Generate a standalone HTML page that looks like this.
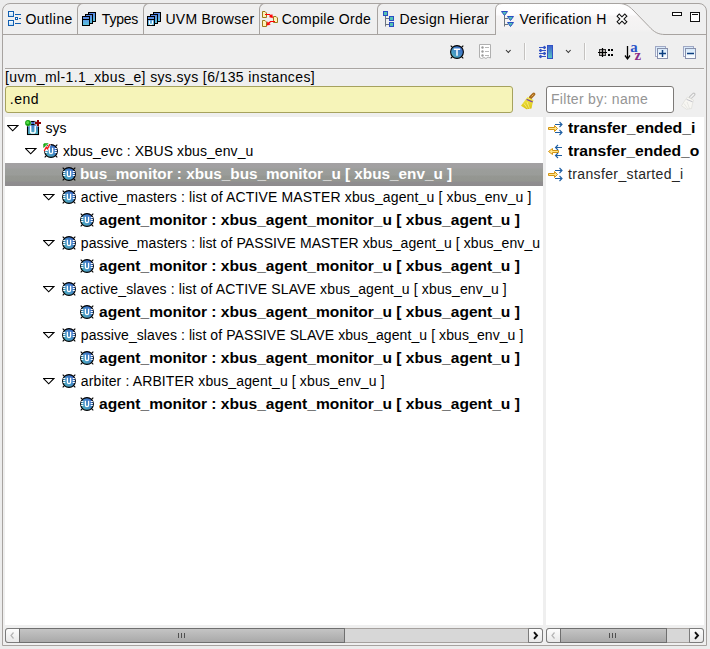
<!DOCTYPE html>
<html><head><meta charset="utf-8">
<style>
*{margin:0;padding:0;box-sizing:border-box}
html,body{width:710px;height:649px;overflow:hidden;background:#ececec;font-family:"Liberation Sans",sans-serif;color:#000}
.a{position:absolute}
.t{position:absolute;font-size:14px;line-height:16px;white-space:nowrap}
.b{font-weight:bold}
#frame{left:2px;top:3px;width:705px;height:643px;border:1px solid #a7a3a0;border-radius:8px 8px 0 0;background:#efefef}
.tab{position:absolute;top:3px;height:32px;border-left:1px solid #a7a3a0;border-top:1px solid #a7a3a0;border-top-left-radius:6px}
#tabline1{left:2px;top:34px;width:493px;height:1px;background:#a7a3a0}
#tabline2{left:664px;top:34px;width:42px;height:1px;background:#a7a3a0}
#hline{left:5px;top:68px;width:699px;height:1px;background:#a9a5a2}
#hline2{left:5px;top:69px;width:699px;height:1px;background:#f5f5f5}
#yellow{left:5px;top:86px;width:508px;height:27px;background:#f6f4b9;border:1px solid #a6a25e;border-radius:3px}
#filter{left:546px;top:86px;width:128px;height:27px;background:#fff;border:1px solid #7d7a78;border-radius:3px}
#tree1{left:5px;top:117px;width:538px;height:508px;background:#fff;overflow:hidden}
#tree2{left:546px;top:117px;width:158px;height:508px;background:#fff;overflow:hidden}
#sel{left:0;top:46px;width:538px;height:23px;background:linear-gradient(#a3a1a3 0,#a1a0a1 5px,#9c9e9b 6px,#9a9c99 12px,#959792 13px,#939590 18px,#908e90 19px,#8e8c8e 23px)}
.sb{position:absolute;top:628px;height:15px;border:1px solid #a5a19e;background:#d7d7d7;border-radius:3px}
.btn{position:absolute;top:-1px;height:15px;width:15px;border:1px solid #7b7b7b;background:linear-gradient(#fdfdfd,#e8e8e8)}
.thumb{position:absolute;top:-1px;height:15px;border:1px solid #6f6f6f;background:linear-gradient(#c4c4c4,#a9a9a9)}
.grip{position:absolute;top:4px;width:1px;height:5px;background:#505050}
</style></head><body>
<svg width="0" height="0" style="position:absolute">
<defs>
 <linearGradient id="bg1" x1="0" y1="0" x2="0" y2="1"><stop offset="0" stop-color="#3b62c9"/><stop offset="1" stop-color="#4fb9c4"/></linearGradient>
 <linearGradient id="bg2" x1="1" y1="0" x2="0" y2="1"><stop offset="0" stop-color="#3558c8"/><stop offset="1" stop-color="#52bcc0"/></linearGradient>
 <linearGradient id="lb" x1="0" y1="0" x2="0" y2="1"><stop offset="0" stop-color="#ffffff"/><stop offset="1" stop-color="#b8dcf8"/></linearGradient>
 <linearGradient id="eb" x1="0" y1="0" x2="0" y2="1"><stop offset="0" stop-color="#d4e8fa"/><stop offset="1" stop-color="#ffffff"/></linearGradient>
 <symbol id="bugU" viewBox="0 0 14 14">
  <path d="M0.7,0.7 L3.2,3.2 M13.3,0.7 L10.8,3.2 M0.7,13.3 L3.2,10.8 M13.3,13.3 L10.8,10.8" stroke="#000" stroke-width="1.1"/>
  <circle cx="7" cy="7" r="6.4" fill="url(#bg2)" stroke="#000" stroke-width="1.1"/>
  <path d="M1.2,4.5 H3.3 M1.1,6.5 H3.3 M1.2,8.5 H3.3 M10.7,4.5 H12.8 M10.7,6.5 H12.9 M10.7,8.5 H12.8" stroke="#fff" stroke-width="1"/>
  <path d="M5.4,3.8 V8 Q5.4,9.7 7,9.7 Q8.6,9.7 8.6,8 V3.8" fill="none" stroke="#fff" stroke-width="1.3"/>
 </symbol>
 <symbol id="tri" viewBox="0 0 12 7">
  <path d="M0.5,0.5 H10.9 L5.7,5.8 Z" fill="#fff" stroke="#000" stroke-width="1.1" stroke-linejoin="miter"/>
 </symbol>
 <symbol id="pin" viewBox="0 0 16 15">
  <path d="M1.5,6.5 H7.5 V4.5 L10.5,7.5 L7.5,10.5 V8.5 H1.5 Z" fill="#ffe58a" stroke="#d39412" stroke-width="1"/>
  <path d="M8,3.5 H15 M12.5,1 L15,3.5 L12.5,6 M8,11.5 H15 M12.5,9 L15,11.5 L12.5,14" fill="none" stroke="#1f5fa3" stroke-width="1.1"/>
 </symbol>
 <symbol id="pout" viewBox="0 0 16 15">
  <path d="M11.5,6.5 H5.5 V4.5 L1.5,7.5 L5.5,10.5 V8.5 H11.5 Z" fill="#ffe58a" stroke="#d39412" stroke-width="1"/>
  <path d="M15,3.5 H8.5 M11,1 L8.5,3.5 L11,6 M15,11.5 H8.5 M11,9 L8.5,11.5 L11,14" fill="none" stroke="#1f5fa3" stroke-width="1.1"/>
 </symbol>
 <symbol id="sysI" viewBox="0 0 17 16">
  <rect x="2.5" y="1.5" width="11" height="13" fill="url(#bg1)" stroke="#000" stroke-width="1.1"/>
  <path d="M2.5,4.5 H13.5" stroke="#000" stroke-width="1.1"/>
  <path d="M5.6,5.8 V11.4 Q5.6,13.1 7.9,13.1 Q10.2,13.1 10.2,11.4 V5.8" fill="none" stroke="#fff" stroke-width="1.5"/>
  <circle cx="3" cy="3" r="3.4" fill="#fff" opacity="0.7"/>
  <circle cx="3" cy="3" r="2.9" fill="#12a012"/><circle cx="2.6" cy="2.5" r="1.5" fill="#5ade48"/>
  <path d="M9.5,3 H16.5 M13,-0.5 V6.5" stroke="#fff" stroke-width="3.4" opacity="0.8"/>
  <path d="M10,3 H16 M13,0 V6" stroke="#8a0000" stroke-width="2"/>
 </symbol>
</defs></svg>
<div id="frame" class="a"></div>

<!-- tabs -->
<div class="tab" style="left:77px;width:66px"></div>
<div class="tab" style="left:143px;width:116px"></div>
<div class="tab" style="left:259px;width:118px"></div>
<div class="tab" style="left:377px;width:119px"></div>
<div id="tabline1" class="a"></div>
<div id="tabline2" class="a"></div>
<svg class="a" style="left:494px;top:3px" width="172" height="33">
  <defs><linearGradient id="atg" x1="0" y1="0" x2="0" y2="1"><stop offset="0" stop-color="#ffffff"/><stop offset="0.33" stop-color="#fdfcfd"/><stop offset="0.4" stop-color="#f6f4f4"/><stop offset="0.8" stop-color="#f3f2f2"/><stop offset="0.88" stop-color="#efefef"/><stop offset="1" stop-color="#efefef"/></linearGradient></defs>
  <path d="M1.5,32 L1.5,7 Q1.5,0.5 8,0.5 L125,0.5 C131,0.5 135,3 139,7 L155,23.5 C160,29 164,31.5 171,31.5 L172,31.5 L172,33 L1.5,33 Z" fill="url(#atg)"/>
  <path d="M1.5,32 L1.5,7 Q1.5,0.5 8,0.5 L125,0.5 C131,0.5 135,3 139,7 L155,23.5 C160,29 164,31.5 171,31.5 L172,31.5" fill="none" stroke="#a7a3a0" stroke-width="1"/>
</svg>

<div class="t" style="left:25.5px;letter-spacing:0.42px;top:10.5px">Outline</div>
<div class="t" style="left:101.8px;letter-spacing:-0.2px;top:10.5px">Types</div>
<div class="t" style="left:165.5px;letter-spacing:0.22px;top:10.5px">UVM Browser</div>
<div class="t" style="left:281.7px;letter-spacing:0.24px;top:10.5px">Compile Orde</div>
<div class="t" style="left:399.6px;letter-spacing:0.32px;top:10.5px">Design Hierar</div>
<div class="t" style="left:519.5px;letter-spacing:0.33px;top:10.5px">Verification H</div>

<!-- close x -->
<svg class="a" style="left:616px;top:13px" width="13" height="12">
  <path d="M3.2,3.2 L8.8,8.8 M8.8,3.2 L3.2,8.8" stroke="#111" stroke-width="4" stroke-linecap="square"/>
  <path d="M3.2,3.2 L8.8,8.8 M8.8,3.2 L3.2,8.8" stroke="#fff" stroke-width="1.9" stroke-linecap="square"/>
</svg>
<!-- min/max -->
<div class="a" style="left:672px;top:12px;width:10px;height:4px;border:1px solid #111;background:#fff"></div>
<div class="a" style="left:690px;top:12px;width:10px;height:10px;border:1px solid #111;background:#fff"></div><div class="a" style="left:692px;top:14px;width:6px;height:1px;background:#111"></div>

<svg class="a" style="left:0;top:0" width="710" height="117">
 <defs>
  <linearGradient id="tg" x1="0" y1="0" x2="0" y2="1"><stop offset="0" stop-color="#5a82e6"/><stop offset="1" stop-color="#5cc6dc"/></linearGradient>
  <linearGradient id="tg2" x1="0" y1="0" x2="0" y2="1"><stop offset="0" stop-color="#3d5fd0"/><stop offset="1" stop-color="#5ac8c0"/></linearGradient>
  <linearGradient id="brm" x1="0" y1="0" x2="0" y2="1"><stop offset="0" stop-color="#f6ec50"/><stop offset="1" stop-color="#d8c010"/></linearGradient>
 </defs>
 <!-- Outline icon -->
 <rect x="8.5" y="11.5" width="5" height="5" fill="url(#lb)" stroke="#0f5db0"/>
 <rect x="8.5" y="20.5" width="5" height="5" fill="url(#lb)" stroke="#0f5db0"/>
 <path d="M15,14.5 H21 M15,23.5 H21 M19,18.5 H21" stroke="#0f5db0"/>
 <rect x="15.5" y="17.5" width="2" height="2" fill="#fff" stroke="#0f5db0"/>
 <!-- Types icon -->
 <g stroke="#000" stroke-width="1">
  <rect x="88.5" y="12.5" width="7" height="9" fill="url(#tg)"/>
  <rect x="85.5" y="14.5" width="7" height="9" fill="url(#tg)"/>
  <rect x="82.5" y="16.5" width="7" height="9" fill="url(#tg)"/>
  <path d="M82.5,19.5 H89.5"/>
 </g>
 <!-- UVM browser icon -->
 <g stroke="#000" stroke-width="1">
  <rect x="153.5" y="12.5" width="7" height="9" fill="url(#tg)"/>
  <rect x="150.5" y="14.5" width="7" height="9" fill="url(#tg)"/>
  <rect x="147.5" y="16.5" width="7" height="9" fill="url(#tg)"/>
  <path d="M147.5,19.5 H154.5"/>
 </g>
 <path d="M149.5,20.5 V23 Q149.5,24.6 151,24.6 Q152.5,24.6 152.5,23 V20.5" fill="none" stroke="#fff" stroke-width="1.1"/>
 <!-- Compile order icon -->
 <g fill="#fff3b8" stroke="#9c7a1c" stroke-width="1">
  <path d="M262.5,11.5 H265 L266.5,13 V17.5 H262.5 Z"/>
  <path d="M262.5,20.5 H265 L266.5,22 V26.5 H262.5 Z"/>
  <path d="M273.5,16.5 H276 L277.5,18 V22.5 H273.5 Z"/>
 </g>
 <path d="M265,14.5 H269.5 L271,16" fill="none" stroke="#f00" stroke-width="1.2"/>
 <path d="M272.8,17.8 L272,14.4 L269.4,17 Z" fill="#f00" stroke="#f00" stroke-width="0.5"/>
 <path d="M275,21.5 H270.5 L269,23" fill="none" stroke="#f00" stroke-width="1.2"/>
 <path d="M266.8,25.2 L270.2,24.4 L267.6,21.8 Z" fill="#f00" stroke="#f00" stroke-width="0.5"/>
 <!-- Design hierarchy icon -->
 <path d="M385.5,16 V26.5 M385.5,18.5 H389 M385.5,24.5 H389" stroke="#6a7480" stroke-width="1"/>
 <g fill="#52c2b4" stroke="#2a4cc4" stroke-width="1">
  <rect x="383.5" y="11.5" width="4" height="4"/>
  <rect x="389.5" y="16.5" width="4" height="4"/>
  <rect x="389.5" y="22.5" width="4" height="4"/>
 </g>
 <!-- Verification icon -->
 <path d="M504.5,15 V26.5 M504.5,18.5 H508 M504.5,24.5 H508" stroke="#6a7480" stroke-width="1"/>
 <g fill="#52c2b4" stroke="#2a4cc4" stroke-width="1" stroke-linejoin="round">
  <path d="M501.5,11.5 H507.5 L504.5,15.5 Z"/>
  <path d="M507.5,16.5 H513.5 L510.5,20.5 Z"/>
  <path d="M507.5,22.5 H513.5 L510.5,26.5 Z"/>
 </g>
 <!-- T bug -->
 <path d="M450.7,45.7 L453.2,48.2 M463.3,45.7 L460.8,48.2 M450.7,58.3 L453.2,55.8 M463.3,58.3 L460.8,55.8" stroke="#000" stroke-width="1.1"/>
 <circle cx="457" cy="52" r="6.4" fill="url(#bg2)" stroke="#000" stroke-width="1.1"/>
 <path d="M453.8,49.3 H460.2 M457,49.3 V55.8" stroke="#fff" stroke-width="1.5"/>
 <!-- list icon disabled -->
 <path d="M479.5,44.5 H490.5 V58 L488,57 L486,58.5 L484,57.5 L481.5,58.5 L479.5,57.5 Z" fill="#fff" stroke="#b0b0b0" stroke-width="1"/>
 <g fill="#9a9a9a"><circle cx="482.5" cy="47.5" r="1.2"/><circle cx="482.5" cy="51.5" r="1.2"/><circle cx="482.5" cy="55.5" r="1.2"/></g>
 <path d="M485,47.5 H489 M485,51.5 H489 M485,55.5 H489" stroke="#b8b8b8" stroke-width="1"/>
 <!-- chevrons -->
 <path d="M506,50 L508.3,52.5 L510.6,50" fill="none" stroke="#333" stroke-width="1.1"/>
 <path d="M566,50 L568.3,52.5 L570.6,50" fill="none" stroke="#333" stroke-width="1.1"/>
 <!-- separators -->
 <path d="M524.5,43 V60 M584.5,43 V60" stroke="#c4c2c0" stroke-width="1"/>
 <path d="M525.5,43 V60 M585.5,43 V60" stroke="#fbfbfb" stroke-width="1"/>
 <!-- arrows icon -->
 <rect x="547.5" y="45.5" width="5" height="13" fill="url(#tg2)" stroke="#3252c4"/>
 <g stroke="#3252c4" stroke-width="1" fill="#3252c4">
  <path d="M539,47.5 H544"/><path d="M544,46 L546,47.5 L544,49 Z"/>
  <path d="M541,50.5 H546"/><path d="M541,49 L539,50.5 L541,52 Z"/>
  <path d="M539,53.5 H544"/><path d="M544,52 L546,53.5 L544,55 Z"/>
  <path d="M541,56.5 H546"/><path d="M541,55 L539,56.5 L541,58 Z"/>
 </g>
 <!-- #:: icon -->
 <rect x="599.5" y="49.5" width="6" height="6" fill="#b8b4b0" stroke="#333"/>
 <path d="M598,52.5 H607 M602.5,48 V57" stroke="#000" stroke-width="1.2"/>
 <g fill="#000"><rect x="608" y="49" width="2" height="2"/><rect x="611" y="49" width="2" height="2"/><rect x="608" y="54" width="2" height="2"/><rect x="611" y="54" width="2" height="2"/></g>
 <!-- sort az -->
 <path d="M627.5,46 V58" stroke="#000" stroke-width="1.3"/>
 <path d="M625,55.5 L627.5,58.8 L630,55.5" fill="none" stroke="#000" stroke-width="1.3"/>
 <text x="630.2" y="51.9" font-family="Liberation Serif" font-weight="bold" font-size="14.8" fill="#2a52c8">a</text>
 <text x="634.5" y="59.9" font-family="Liberation Serif" font-weight="bold" font-size="14.8" fill="#882a88">z</text>
 <!-- expand all -->
 <rect x="655.5" y="46.5" width="10" height="10" fill="url(#eb)" stroke="#a0a8c4"/>
 <rect x="657.5" y="48.5" width="10" height="10" fill="url(#eb)" stroke="#8890ac"/>
 <path d="M659,53.5 H666 M662.5,50 V57" stroke="#0c3f80" stroke-width="1.5"/>
 <!-- collapse all -->
 <rect x="683.5" y="46.5" width="10" height="10" fill="url(#eb)" stroke="#a0a8c4"/>
 <rect x="685.5" y="48.5" width="10" height="10" fill="url(#eb)" stroke="#8890ac"/>
 <path d="M687,53.5 H694" stroke="#0c3f80" stroke-width="1.5"/>
 <!-- broom -->
 <path d="M530.5,97.5 L533.8,94.2" stroke="#a86a1c" stroke-width="3.2" stroke-linecap="round"/>
 <path d="M531.5,96.5 L533.5,94.5" stroke="#e8b060" stroke-width="1"/>
 <path d="M527.5,97 L533.5,100 L532.2,105 L531.5,108.5 L526.5,109.2 L521,105.8 L524.5,101 Z" fill="url(#brm)"/>
 <path d="M524,103.5 L527.5,108.5 M527,102 L529.5,108.5" stroke="#fff6a0" stroke-width="0.8" opacity="0.8"/>
 <path d="M526.6,99.4 L532.6,101.8" stroke="#7a4aa0" stroke-width="1.3"/>
 <!-- disabled broom -->
 <path d="M690.5,97.5 L693.8,94.2" stroke="#c4c4c4" stroke-width="3.4" stroke-linecap="round"/>
 <path d="M690.8,97.2 L693.6,94.4" stroke="#f4f4f4" stroke-width="1.4" stroke-linecap="round"/>
 <path d="M687.5,97 L693.5,100 L692.2,105 L691.5,108.5 L686.5,109.2 L681.5,105.8 L684.5,101 Z" fill="#f7f6f2" stroke="#dcdcd8" stroke-width="0.7"/>
 <path d="M684,103.5 L687.5,108.5 M687,102 L689.5,108.5" stroke="#e0e0dc" stroke-width="0.7"/>
 <path d="M686.6,99.4 L692.6,101.8" stroke="#c0c0c8" stroke-width="1"/>
</svg>
<div id="hline" class="a"></div>
<div id="hline2" class="a"></div>

<div class="t" style="left:5px;letter-spacing:0.37px;top:69px">[uvm_ml-1.1_xbus_e] sys.sys [6/135 instances]</div>

<div id="yellow" class="a"></div>
<div class="t" style="left:9.8px;letter-spacing:0.5px;top:91px">.end</div>
<div id="filter" class="a"></div>
<div class="t" style="left:551px;top:91px;color:#959595;letter-spacing:0.3px">Filter by: name</div>

<div id="tree1" class="a">
  <div id="sel" class="a"></div>
  <svg class="a" style="left:2px;top:8px" width="12" height="7"><use href="#tri"/></svg>
  <svg class="a" style="left:20px;top:3px" width="17" height="16"><use href="#sysI"/></svg>
  <div class="t" style="left:40.4px;top:3px;letter-spacing:0px">sys</div>
  <svg class="a" style="left:20px;top:31px" width="12" height="7"><use href="#tri"/></svg>
  <svg class="a" style="left:39px;top:27px" width="14" height="14"><use href="#bugU"/></svg>
  <div class="t" style="left:58px;letter-spacing:0.08px;top:26px">xbus_evc : XBUS xbus_env_u</div>
  <svg class="a" style="left:57px;top:50px" width="14" height="14"><use href="#bugU"/></svg>
  <div class="t b" style="left:75px;letter-spacing:0px;transform:scaleX(1.092);transform-origin:0 0;top:49px;color:#fff">bus_monitor : xbus_bus_monitor_u [ xbus_env_u ]</div>
  <svg class="a" style="left:38px;top:77px" width="12" height="7"><use href="#tri"/></svg>
  <svg class="a" style="left:57px;top:73px" width="14" height="14"><use href="#bugU"/></svg>
  <div class="t" style="left:75.8px;letter-spacing:0.145px;top:72px">active_masters : list of ACTIVE MASTER xbus_agent_u [ xbus_env_u ]</div>
  <svg class="a" style="left:75px;top:96px" width="14" height="14"><use href="#bugU"/></svg>
  <div class="t b" style="left:94px;letter-spacing:0px;transform:scaleX(1.111);transform-origin:0 0;top:95px">agent_monitor : xbus_agent_monitor_u [ xbus_agent_u ]</div>
  <svg class="a" style="left:38px;top:123px" width="12" height="7"><use href="#tri"/></svg>
  <svg class="a" style="left:57px;top:119px" width="14" height="14"><use href="#bugU"/></svg>
  <div class="t" style="left:75.8px;letter-spacing:0.09px;top:118px">passive_masters : list of PASSIVE MASTER xbus_agent_u [ xbus_env_u ]</div>
  <svg class="a" style="left:75px;top:142px" width="14" height="14"><use href="#bugU"/></svg>
  <div class="t b" style="left:94px;letter-spacing:0px;transform:scaleX(1.111);transform-origin:0 0;top:141px">agent_monitor : xbus_agent_monitor_u [ xbus_agent_u ]</div>
  <svg class="a" style="left:38px;top:169px" width="12" height="7"><use href="#tri"/></svg>
  <svg class="a" style="left:57px;top:165px" width="14" height="14"><use href="#bugU"/></svg>
  <div class="t" style="left:75.8px;letter-spacing:0.144px;top:164px">active_slaves : list of ACTIVE SLAVE xbus_agent_u [ xbus_env_u ]</div>
  <svg class="a" style="left:75px;top:188px" width="14" height="14"><use href="#bugU"/></svg>
  <div class="t b" style="left:94px;letter-spacing:0px;transform:scaleX(1.111);transform-origin:0 0;top:187px">agent_monitor : xbus_agent_monitor_u [ xbus_agent_u ]</div>
  <svg class="a" style="left:38px;top:215px" width="12" height="7"><use href="#tri"/></svg>
  <svg class="a" style="left:57px;top:211px" width="14" height="14"><use href="#bugU"/></svg>
  <div class="t" style="left:75.8px;letter-spacing:0.088px;top:210px">passive_slaves : list of PASSIVE SLAVE xbus_agent_u [ xbus_env_u ]</div>
  <svg class="a" style="left:75px;top:234px" width="14" height="14"><use href="#bugU"/></svg>
  <div class="t b" style="left:94px;letter-spacing:0px;transform:scaleX(1.111);transform-origin:0 0;top:233px">agent_monitor : xbus_agent_monitor_u [ xbus_agent_u ]</div>
  <svg class="a" style="left:38px;top:261px" width="12" height="7"><use href="#tri"/></svg>
  <svg class="a" style="left:57px;top:257px" width="14" height="14"><use href="#bugU"/></svg>
  <div class="t" style="left:75.8px;letter-spacing:0.13px;top:256px">arbiter : ARBITER xbus_agent_u [ xbus_env_u ]</div>
  <svg class="a" style="left:75px;top:280px" width="14" height="14"><use href="#bugU"/></svg>
  <div class="t b" style="left:94px;letter-spacing:0px;transform:scaleX(1.111);transform-origin:0 0;top:279px">agent_monitor : xbus_agent_monitor_u [ xbus_agent_u ]</div>
  <svg class="a" style="left:38px;top:26px" width="9" height="9"><path d="M0.3,5 V1.3 L1.3,0.3 H5.8 Z" fill="#12a412"/><path d="M1.2,3.2 L2.5,1.2 L4.5,1.2 Z" fill="#58d848"/><path d="M1.2,8 L3.3,4.3 L4.4,5.8 L5.6,3.6 L6.8,1.2" fill="none" stroke="#fff" stroke-width="2.6"/><path d="M1.2,8 L3.3,4.3 L4.4,5.8 L5.6,3.6 L6.8,1.2" fill="none" stroke="#f41010" stroke-width="1.3"/></svg>
</div>

<div id="tree2" class="a">
  <svg class="a" style="left:1px;top:4px" width="16" height="15"><use href="#pin"/></svg>
  <svg class="a" style="left:1px;top:27px" width="16" height="15"><use href="#pout"/></svg>
  <svg class="a" style="left:1px;top:50px" width="16" height="15"><use href="#pin"/></svg>
  <div class="t b" style="left:22px;letter-spacing:0px;transform:scaleX(1.129);transform-origin:0 0;top:3px">transfer_ended_i</div>
  <div class="t b" style="left:22px;top:26px;letter-spacing:0px;transform:scaleX(1.118);transform-origin:0 0">transfer_ended_o</div>
  <div class="t" style="left:22px;letter-spacing:0.365px;top:49px;color:#262626">transfer_started_i</div>
</div>

<!-- scrollbars -->
<div class="sb" style="left:5px;width:538px">
  <div class="btn" style="left:-1px;border-radius:3px 0 0 3px"><svg class="a" style="left:0;top:0" width="13" height="13"><path d="M7.5,3.5 L5,6.5 L7.5,9.5" fill="none" stroke="#b4b4b4" stroke-width="1.2"/></svg></div>
  <div class="thumb" style="left:13px;width:326px"><div class="grip" style="left:158px"></div><div class="grip" style="left:161px"></div><div class="grip" style="left:164px"></div></div>
  <div class="btn" style="left:522px;border-radius:0 3px 3px 0"><svg class="a" style="left:0;top:0" width="13" height="13"><path d="M5,3.2 L8,6.5 L5,9.8" fill="none" stroke="#111" stroke-width="1.9"/></svg></div>
</div>
<div class="sb" style="left:546px;width:158px">
  <div class="btn" style="left:-1px;border-radius:3px 0 0 3px"><svg class="a" style="left:0;top:0" width="13" height="13"><path d="M7.5,3.5 L5,6.5 L7.5,9.5" fill="none" stroke="#b4b4b4" stroke-width="1.2"/></svg></div>
  <div class="thumb" style="left:13px;width:107px"><div class="grip" style="left:48px"></div><div class="grip" style="left:51px"></div><div class="grip" style="left:54px"></div></div>
  <div class="btn" style="left:142px;border-radius:0 3px 3px 0"><svg class="a" style="left:0;top:0" width="13" height="13"><path d="M5,3.2 L8,6.5 L5,9.8" fill="none" stroke="#111" stroke-width="1.9"/></svg></div>
</div>
</body></html>
